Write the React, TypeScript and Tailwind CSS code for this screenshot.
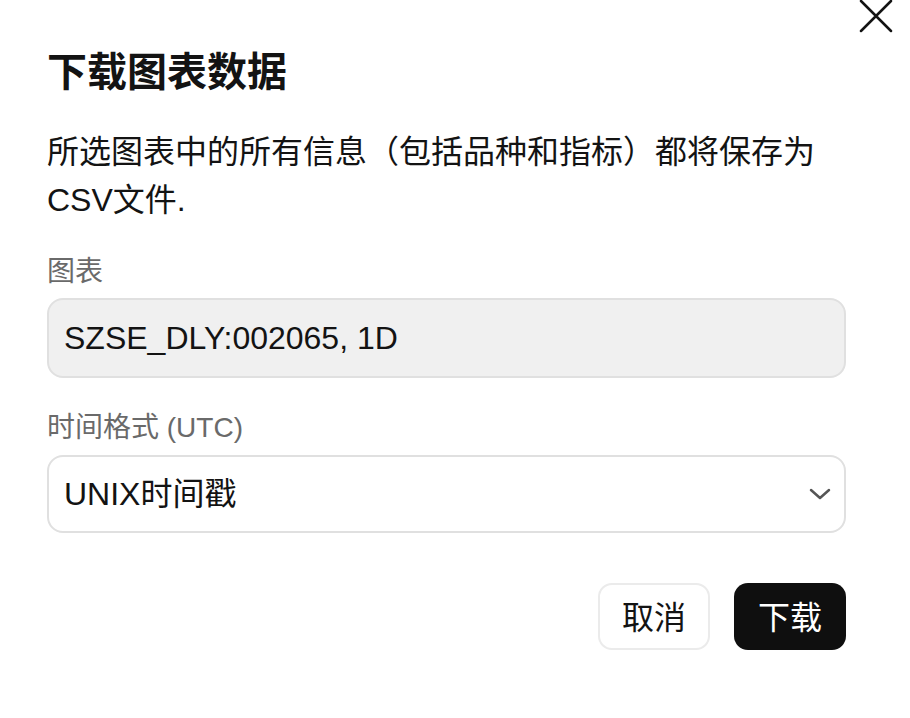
const font = "font-['Liberation_Sans','Noto_Sans_CJK_SC',sans-serif]";

const App = () => {
  return (
    <div className={`relative w-[910px] h-[718px] bg-white text-[#131313] ${font}`}>
      <button className="absolute left-[858px] top-[-2px] w-[36px] h-[36px] flex items-center justify-center text-[#131313]">
        <svg width="36" height="36" viewBox="0 0 36 36" fill="none" stroke="currentColor" strokeWidth="2.5" strokeLinecap="round">
          <path d="M3 3 L33 33 M33 3 L3 33" />
        </svg>
      </button>

      <div className="w-[799px] ml-[47px] pt-[48px]">
        <h2 className="text-[40px] leading-[48px] font-bold">下载图表数据</h2>
        <p className="mt-[32px] text-[32px] leading-[48px]">
          所选图表中的所有信息（包括品种和指标）都将保存为CSV文件.
        </p>

        <div className="mt-[28px] text-[28px] leading-[40px] text-[#6a6a6a]">图表</div>
        <div className="mt-[6px] h-[80px] rounded-[16px] border-2 border-[#e0e0e0] bg-[#f0f0f0] pl-[15px] pr-[16px] flex items-center text-[32px]">
          SZSE_DLY:002065, 1D
        </div>

        <div className="mt-[30px] text-[28px] leading-[40px] text-[#6a6a6a]">时间格式 (UTC)</div>
        <div className="mt-[7px] h-[78px] rounded-[16px] border-2 border-[#e0e0e0] bg-white pl-[15px] pr-[12px] flex items-center justify-between text-[32px]">
          <span>UNIX时间戳</span>
          <svg width="24" height="14" viewBox="0 0 24 14" fill="none" stroke="#555" strokeWidth="2.5" strokeLinecap="round" strokeLinejoin="round">
            <path d="M3 3 L12 11 L21 3" />
          </svg>
        </div>

        <div className="mt-[50px] flex justify-end gap-[24px]">
          <button className="w-[112px] h-[67px] rounded-[14px] border-2 border-[#ebebeb] bg-white text-[32px] text-[#131313] pt-[2px]">
            取消
          </button>
          <button className="w-[112px] h-[67px] rounded-[14px] bg-[#0f0f0f] text-[32px] text-white pt-[2px]">
            下载
          </button>
        </div>
      </div>
    </div>
  );
};

export default App;
